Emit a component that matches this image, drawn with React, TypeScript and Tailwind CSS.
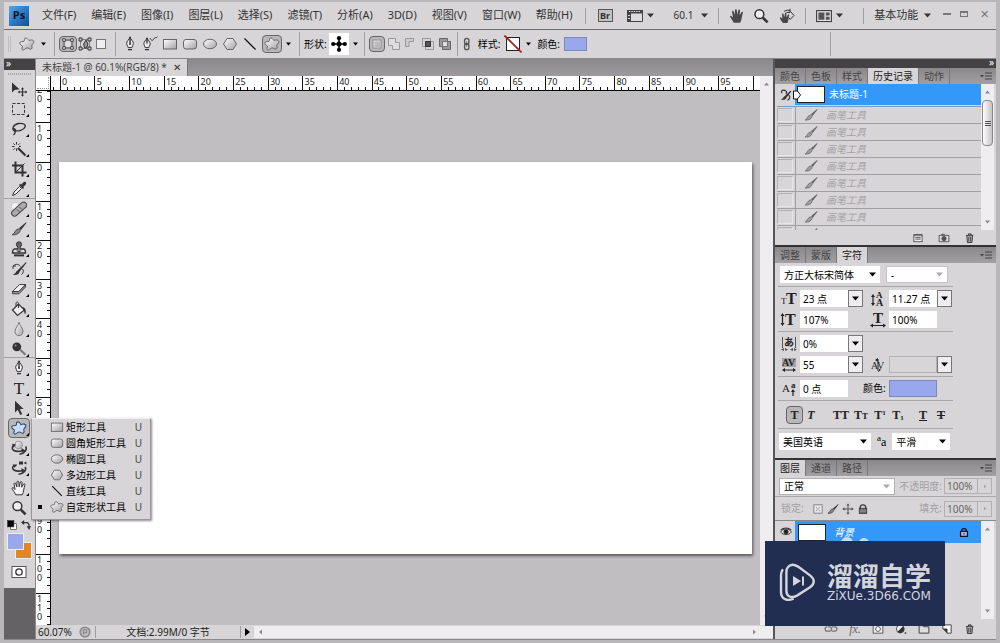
import type { ReactNode } from "react";
import clsx from "clsx";
import { twMerge } from "tailwind-merge";

const STAR = "M6 2.2C7.5 1.2 9 3 10 4.6C12 3.4 15.4 4 14.8 6.3C14.2 8 12.4 8.6 12.8 10C13.8 12.6 12 14 10 12.6C8.4 11.4 7.4 11.8 5.6 13.4C3.6 15 2 13.4 3.4 11C4.3 9.4 .8 9.2 .8 7.2C.8 5 4 5.9 5 5.2C5.8 4.6 5 3 6 2.2Z";

function Icon({ children, className }: { children: ReactNode; className?: string }) {
  return (
    <svg viewBox="0 0 16 16" className={twMerge("size-4 shrink-0", className)} fill="none" stroke="#333" aria-hidden="true">
      {children}
    </svg>
  );
}

const ink = { fill: "#333", stroke: "none" };

const glyphs: Record<string, ReactNode> = {
  move: <><path d="M1 1.5V11.5L3.6 9L8.5 8.2Z" {...ink} /><path d="M11.5 7V15M7.5 11H15.5" strokeWidth="1.2" /><path d="M11.5 6.2L13 8.2H10ZM11.5 15.8L13 13.8H10ZM6.8 11L8.8 9.5V12.5ZM16.2 11L14.2 9.5V12.5Z" {...ink} /></>,
  marquee: <rect x="1.5" y="2.5" width="12" height="11" strokeDasharray="3 1.6" />,
  lasso: <><path d="M4 10.5C0 8.5 2 3.5 7.5 2.5C12 1.8 15 3.5 14 6C13 9 7 10.8 3.5 9.5C2 9 2 7.5 3.5 7.8C5.5 8.2 4.5 12 2.5 14" strokeWidth="1.3" /></>,
  wand: <><path d="M7 7L14.5 14.5" strokeWidth="2.2" /><path d="M5.5 1V3.5M5.5 7.5V10M1 5.5H3.5M2.4 2.4L4 4M8.8 2.4L7.2 4M2.4 8.8L4 7.2M8 5.5H10" /></>,
  crop: <><path d="M4.5 .5V11.5H15.5M1 4.5H11.5V15.5" strokeWidth="2" /><path d="M5 11L13.5 2.5" /></>,
  dropper: <><path d="M1.5 14.5L3 11L8.5 5.5L10.5 7.5L5 13Z" fill="#eee" /><path d="M8 4L12 8L13.2 6.8L12.2 5.8C15 3.8 15.8 2.2 14.8 1.2C13.8 .2 12.2 1 10.2 3.8L9.2 2.8Z" {...ink} /></>,
  heal: <><circle cx="4.2" cy="5.5" r="3.8" fill="#f4f4f4" stroke="#bbb" strokeDasharray="1.5 1" /><rect x="-1" y="5.2" width="18" height="6" rx="3" transform="rotate(-42 8 8)" fill="#aaa" stroke="#444" /><path d="M6 8.5L8.5 11M8.5 6L11 8.5" stroke="#555" /></>,
  brush: <><path d="M15 1.2L8 7.2L9.8 9.2L15.4 2Z" {...ink} /><path d="M7.5 7.8L9.2 9.6C8.8 12 6 14.2 1.2 13.8C4 12.6 3.8 8.6 7.5 7.8Z" fill="#888" stroke="#333" strokeWidth=".8" /></>,
  stamp: <><circle cx="8" cy="3.4" r="2.6" fill="#666" /><path d="M7 5.5V8H3.5C1.5 8 1.5 12 1.5 12H14.5C14.5 12 14.5 8 12.5 8H9V5.5" fill="#ddd" strokeWidth="1.4" /><path d="M3 14.4H13" strokeWidth="2" /><path d="M5 9.4H11L8 11.5Z" {...ink} /></>,
  historyBrush: <><path d="M15 1L6.5 9.5C5 10 5 13 1.5 13.6C5 14.6 8.4 13.4 8.4 11L15.4 2Z" {...ink} /><path d="M2 5C5 2.5 8 3 9.5 5.5M2 5L2 8M2 5H5M11.5 8C13 9.5 12.5 12 10.5 13.5" /></>,
  eraser: <><path d="M1.5 10.5L8.5 3.5H14.5L8 10.5Z" fill="#eee" strokeWidth=".9" /><path d="M1.5 10.5V12.8H8L14.5 6V3.5L8 10.5Z" fill="#999" strokeWidth=".9" /></>,
  bucket: <><path d="M1.5 9L7.5 3L13.5 9L6.5 14.5Z" fill="#eee" strokeWidth="1.2" /><path d="M5 5.5V2.5C5 .5 7.5 .5 7.5 2.5V7" /><path d="M11 6C14.5 6.5 15.4 9 14.4 13.6C13 12 13 10 13 9Z" {...ink} /></>,
  blur: <path d="M8 1.2C8.6 4.5 12 7 12 10.6C12 16 4 16 4 10.6C4 7 7.4 4.5 8 1.2Z" fill="url(#metal)" stroke="#777" />,
  dodge: <><circle cx="5.8" cy="5.8" r="4.4" {...ink} /><path d="M9 8.6L14.5 13.8" strokeWidth="2" stroke="#777" /><circle cx="4.6" cy="4.6" r="1" fill="#999" stroke="none" /></>,
  pen: <><path d="M8 .8C8.4 3.4 11.6 5.2 11.4 7.6C11.2 9 10 10.2 9.8 11.6H6.2C6 10.2 4.8 9 4.6 7.6C4.4 5.2 7.6 3.4 8 .8Z" fill="#eee" /><path d="M8 1V7.5M6 13.6H10" strokeWidth="1.4" /><circle cx="8" cy="8" r="1" {...ink} /></>,
  freePen: <><path d="M5 1.8C5.4 4 8.4 5.6 8.2 8C8 9.2 7 10.2 6.8 11.6H3.2C3 10.2 2 9.2 1.8 8C1.6 5.6 4.6 4 5 1.8Z" fill="#eee" /><path d="M5 2V7.5M3 13.6H7" strokeWidth="1.4" /><path d="M8 2C9 5 11 5 11.5 3.2C12 1.6 14 2 15.5 .8" strokeWidth=".9" /></>,
  cursor: <path d="M4 .8V12.5L6.8 9.8L9.2 15L11.2 14L8.8 9H12.6Z" {...ink} />,
  rect: <rect x="1.5" y="3.5" width="13" height="9.5" fill="url(#metal)" stroke="#666" />,
  rrect: <rect x="1.5" y="3.5" width="13" height="9.5" rx="2.5" fill="url(#metal)" stroke="#666" />,
  ellipse: <ellipse cx="8" cy="8" rx="6.5" ry="4.8" fill="url(#metal)" stroke="#666" />,
  hex: <path d="M5 2.5H11L14.5 8L11 13.5H5L1.5 8Z" fill="url(#metal)" stroke="#666" />,
  line: <path d="M2.5 2.5L13.5 13.5" strokeWidth="1.3" stroke="#111" />,
  star: <path d={STAR} fill="url(#metal)" stroke="#666" />,
  starBlue: <path d={STAR} fill="#c9dcf8" stroke="#33486e" strokeWidth="1.1" />,
  rotate3d: <><circle cx="7.6" cy="5" r="3.8" fill="url(#metal)" stroke="#999" /><path d="M2.4 5.5C-1 10 4 12.8 12 10.5M14.5 6.5C16.5 9 14 13.5 8.5 14.2" strokeWidth="1.6" /><path d="M1 3.8L5 4.6L2.6 7.8ZM10.4 8L14.4 10.4L10.8 12.8Z" {...ink} /></>,
  camera3d: <><path d="M8 1.5H12V4.5H8ZM12.5 3L15.4 1.4V4.6Z" {...ink} /><path d="M3 5.5C-1 9 4 12.4 12 10.5M14 7C16 9.5 13 13.8 7.5 14.2" strokeWidth="1.6" /><path d="M1.6 4.4L6.4 4.6L3.6 7.8ZM10.4 8L14.4 10.4L10.8 12.8Z" {...ink} /></>,
  hand: <path d="M4.8 14.8C3.6 12 1.6 10.4 .9 8.2C1.6 7 2.8 8 4 9.6L3 3.6C3.6 2.4 4.6 2.8 4.8 3.8L5.8 7L6 1.8C6.6 .8 7.6 1 7.8 2L8.2 6.8L9.4 2C10.2 1.2 11 1.6 11 2.6L10.6 7.2L12.6 4C13.6 3.4 14.2 4 13.8 5.2C12.8 8 12.8 12 11.2 14.8Z" fill="#f4f4f4" strokeWidth="1" />,
  handDark: <path d="M4.8 14.8C3.6 12 1.6 10.4 .9 8.2C1.6 7 2.8 8 4 9.6L3 3.6C3.6 2.4 4.6 2.8 4.8 3.8L5.8 7L6 1.8C6.6 .8 7.6 1 7.8 2L8.2 6.8L9.4 2C10.2 1.2 11 1.6 11 2.6L10.6 7.2L12.6 4C13.6 3.4 14.2 4 13.8 5.2C12.8 8 12.8 12 11.2 14.8Z" fill="#484848" stroke="none" />,
  zoom: <><circle cx="6.4" cy="6.2" r="4.4" fill="#eee" strokeWidth="1.5" /><path d="M9.8 9.6L14.6 14.4" strokeWidth="2.6" /></>,
  rotateView: <><path d="M3.8 15C3 13 1 11.6 .8 9.4C1.8 8.8 2.6 9.8 3.4 10.6L3 6C3.6 5.2 4.4 5.6 4.6 6.4L5.4 9L6 5C6.8 4.4 7.4 4.8 7.4 5.6L7.2 9.4L9 6.6C10 6.2 10.4 6.8 10 7.8C9.2 10 9.8 12.6 8.4 15Z" fill="#484848" stroke="none" /><path d="M5 3.5C7 1.8 10 1.6 11.5 3.5L15 7.5L11.2 11.4L9.6 9.4M11 .8V4.4H7.4" /></>,
  quickMask: <><rect x="1" y="2.5" width="14" height="11" fill="#fff" stroke="#555" /><circle cx="8" cy="8" r="3.2" fill="#fff" strokeWidth="1.3" /></>,
  shapeLayer: <><rect x="3.5" y="3.5" width="9" height="9" fill="#ddd" /><path d="M2 2h3v3H2zM11 2h3v3h-3zM2 11h3v3H2zM11 11h3v3h-3z" fill="#eee" /></>,
  paths: <><rect x="3.5" y="3.5" width="9" height="9" strokeDasharray="1 1" /><path d="M2 2h3v3H2zM11 2h3v3h-3zM2 11h3v3H2zM11 11h3v3h-3z" fill="#ccc" /><path d="M9 4L11 8L9.6 12H7.6L6.6 8Z" fill="#999" /></>,
  fillPixels: <rect x="3.5" y="3.5" width="9" height="9" fill="#eee" stroke="#777" />,
  newLayer: <><rect x="3.5" y="3.5" width="9" height="9" fill="#eee" stroke="#888" /><rect x="5" y="5" width="7" height="7" fill="#bbb" stroke="none" /></>,
  add: <path d="M2.5 2.5H9.5V6.5H13.5V13.5H6.5V9.5H2.5Z" fill="#ddd" stroke="#999" />,
  subtract: <path d="M2.5 2.5H10.5V5.5H6V10.5H2.5Z" fill="#ccc" stroke="#999" />,
  intersect: <><path d="M2.5 2.5H10.5V10.5H2.5ZM5.5 5.5H13.5V13.5H5.5Z" stroke="#999" /><path d="M5.5 5.5H10.5V10.5H5.5Z" fill="#555" /></>,
  exclude: <><path d="M2.5 2.5H10.5V10.5H2.5ZM5.5 5.5H13.5V13.5H5.5Z" fill="#999" stroke="#666" /><path d="M5.5 5.5H10.5V10.5H5.5Z" fill="#ddd" stroke="#777" /></>,
  link: <><rect x="5.2" y="1.5" width="5" height="7" rx="2.5" strokeWidth="1.5" stroke="#555" /><rect x="5.2" y="7.5" width="5" height="7" rx="2.5" strokeWidth="1.5" stroke="#555" /><path d="M7.7 5V11" stroke="#555" /></>,
  cross: <><path d="M8 2V14M2 8H14" stroke="#000" strokeWidth="1.6" /><g fill="#000" stroke="none"><circle cx="8" cy="2.2" r="2.1" /><circle cx="8" cy="13.8" r="2.1" /><circle cx="2.2" cy="8" r="2.1" /><circle cx="13.8" cy="8" r="2.1" /><circle cx="8" cy="8" r="2.5" /></g></>,
  film: <><path d="M.5 2.5H15.5V13.5H.5Z" fill="#ddd" stroke="#444" /><path d="M0 2H16V5.4H4V14H0Z" fill="#444" stroke="none" /><path d="M2 3.5H14" stroke="#ddd" strokeDasharray="1.4 1" /><path d="M1 7.5H3M1 10.5H3" stroke="#ddd" /></>,
  arrange: <><rect x=".6" y="2.6" width="14.8" height="11" fill="#ddd" /><path d="M2.4 4.4H8.4V11.8H2.4ZM9.8 4.4H13.6V7.4H9.8ZM9.8 8.8H13.6V11.8H9.8Z" fill="#555" stroke="none" /></>,
  trash: <><path d="M2.5 4.5H12.5M6 4V2.5H9.5V4M3.8 5L4.6 14H10.6L11.4 5" strokeWidth="1.2" fill="#aaa" /><path d="M6.4 6.5V12.5M8.8 6.5V12.5" /></>,
  doc: <><rect x="2.5" y="3.5" width="11" height="9.5" fill="#eee" /><path d="M2.5 5H13.5M4.5 7.5H11.5M4.5 9.5H11.5" /></>,
  camera: <><path d="M1.5 4.5H14.5V13H1.5Z" fill="#ddd" /><circle cx="8" cy="8.8" r="2.8" fill="#555" /><path d="M5 4V3H9" /></>,
  chain: <path d="M4.5 5.5H7C9 5.5 9 10.5 7 10.5H3.5C.5 10.5 .5 5.5 3.5 5.5M9 5.5H12.5C15.5 5.5 15.5 10.5 12.5 10.5H9" strokeWidth="1.4" stroke="#777" />,
  mask: <><rect x="1.5" y="2.5" width="13" height="11" fill="#eee" /><circle cx="8" cy="8" r="3.2" fill="#fff" /></>,
  adjust: <><circle cx="7" cy="8" r="5.2" fill="#eee" /><path d="M3.3 11.7A5.2 5.2 0 0 0 10.7 4.3Z" {...ink} /><path d="M13 12.5h2v2h-2z" {...ink} /></>,
  folder: <path d="M1.5 3.5H6L7.5 5H14.5V13.5H1.5Z" fill="#ddd" strokeWidth="1.2" />,
  newDoc: <><path d="M2.5 2.5H13.5V13.5H8V8H2.5Z" fill="#fff" strokeWidth="1.2" /><path d="M2.5 8L8 13.5V8Z" {...ink} /></>,
  checker: <><rect x="2.5" y="2.5" width="11" height="11" fill="#eee" stroke="#666" /><path d="M5 5h2v2H5zM9 5h2v2H9zM7 7h2v2H7zM5 9h2v2H5zM9 9h2v2H9z" fill="#aaa" stroke="none" /></>,
  pan: <><path d="M8 2V14M2 8H14" strokeWidth="1.3" stroke="#555" /><path d="M8 .5L10.2 3.4H5.8ZM8 15.5L10.2 12.6H5.8ZM.5 8L3.4 5.8V10.2ZM15.5 8L12.6 5.8V10.2Z" fill="#555" stroke="none" /></>,
  lock: <><path d="M4.5 8V5C4.5 1.6 11.5 1.6 11.5 5V8" strokeWidth="1.7" /><rect x="3" y="7" width="10" height="7" fill="#666" /><path d="M4 9.5H12M4 11.5H12" stroke="#999" /></>,
  eye: <><path d="M.8 8C4 2.6 12 2.6 15.2 8C12 12.6 4 12.6 .8 8Z" fill="#eee" strokeWidth="1.2" /><circle cx="8" cy="7.8" r="3" fill="#222" /><path d="M1 5.6C4.6 1.8 11.4 1.8 15 5.6" strokeWidth="1.4" /></>,
  snapshot: <><path d="M13 3L6.5 9.5C5 10 5 12.6 2 13C5 14.2 8.4 13 8.4 11L14 4Z" {...ink} /><path d="M3 3C7 1.4 10 4 8 7M3 3V6M11 8C13.5 10 12 13 9.5 14" strokeWidth="1.3" /></>,
};

function Caret({ className }: { className?: string }) {
  return (
    <svg viewBox="0 0 7 5" className={twMerge("w-[7px] h-[5px] shrink-0", className)} fill="currentColor" aria-hidden="true">
      <path d="M0 .5H7L3.5 4.5Z" />
    </svg>
  );
}

function Rule({ className }: { className?: string }) {
  return <span className={clsx("w-px shrink-0 bg-[#a09ea0]", className)} />;
}

const menus = ["文件(F)", "编辑(E)", "图像(I)", "图层(L)", "选择(S)", "滤镜(T)", "分析(A)", "3D(D)", "视图(V)", "窗口(W)", "帮助(H)"];

function MenuBar() {
  return (
    <header className="flex h-7 shrink-0 items-center border-b border-[#6e6c6e] pl-[5px] pr-1 text-[11px] text-[#333]">
      <div className="mr-[13px] flex size-5 shrink-0 items-center justify-center bg-linear-to-br from-[#52a8e8] to-[#0c4f9c] text-[11px] font-bold text-[#04152e]">Ps</div>
      <nav className="flex gap-[15px] whitespace-nowrap">
        {menus.map(m => <button key={m}>{m}</button>)}
      </nav>
      <Rule className="mx-3 h-4" />
      <button aria-label="Bridge" className="flex h-[13px] w-[15px] items-center justify-center border border-[#555] bg-[#c4c2c4] text-[9px] font-bold leading-none">Br</button>
      <button aria-label="查看额外内容" className="ml-3.5 flex items-center gap-1"><Icon>{glyphs.film}</Icon><Caret /></button>
      <button className="ml-5 flex items-center gap-2 text-[10px]">60.1<Caret /></button>
      <Rule className="mx-2.5 h-4" />
      <div className="flex gap-2">
        <button aria-label="抓手"><Icon>{glyphs.handDark}</Icon></button>
        <button aria-label="缩放"><Icon>{glyphs.zoom}</Icon></button>
        <button aria-label="旋转视图" className="ml-0.5"><Icon>{glyphs.rotateView}</Icon></button>
      </div>
      <Rule className="mx-2.5 h-4" />
      <button aria-label="排列文档" className="flex items-center gap-1"><Icon>{glyphs.arrange}</Icon><Caret /></button>
      <Rule className="ml-5 mr-2.5 h-4" />
      <button className="flex items-center gap-1.5 whitespace-nowrap">基本功能<Caret /></button>
      <div className="ml-auto flex items-center gap-2 pb-1 text-[#777]">
        <button aria-label="最小化" className="px-px"><span className="block h-0.5 w-2 bg-[#777]" /></button>
        <button aria-label="最大化" className="h-1.5 w-2 border border-t-2 border-[#777]" />
        <button aria-label="关闭" className="w-4 leading-none">✕</button>
      </div>
    </header>
  );
}

const pressed = "rounded-sm border border-[#666] bg-[#b9b7b9]";

function OptionsBar() {
  return (
    <div className="flex h-[29px] shrink-0 items-center border-b border-[#8a888a] pl-1 text-[10px] text-black">
      <span className="mr-2 h-4 w-[3px] border-x border-[#c0bec0]" />
      <button aria-label="工具预设" className="flex items-center gap-1.5"><Icon>{glyphs.star}</Icon><Caret className="w-[5px] h-1" /></button>
      <Rule className="ml-2 mr-1 h-6" />
      <button aria-label="形状图层" className={clsx(pressed, "px-px")}><Icon className="size-3.5">{glyphs.shapeLayer}</Icon></button>
      <button aria-label="路径"><Icon>{glyphs.paths}</Icon></button>
      <button aria-label="填充像素"><Icon>{glyphs.fillPixels}</Icon></button>
      <Rule className="mx-1.5 h-6" />
      <div className="flex items-center gap-1">
        {["pen", "freePen", "rect", "rrect", "ellipse", "hex", "line"].map(g => (
          <button key={g} aria-label={g}><Icon>{glyphs[g]}</Icon></button>
        ))}
        <button aria-label="自定形状" className={clsx(pressed, "px-px")}><Icon>{glyphs.star}</Icon></button>
        <Caret className="w-[5px] h-1" />
      </div>
      <Rule className="ml-2 mr-1 h-6" />
      <span>形状:</span>
      <button aria-label="形状" className="ml-0.5 flex items-center gap-1"><span className="bg-white px-0.5 py-[3px]"><Icon>{glyphs.cross}</Icon></span><Caret className="w-[5px] h-1" /></button>
      <Rule className="ml-1.5 mr-1 h-6" />
      <div className="flex items-center gap-px">
        <button aria-label="创建新图层" className={pressed}><Icon className="size-3.5">{glyphs.newLayer}</Icon></button>
        {["add", "subtract", "intersect", "exclude"].map(g => (
          <button key={g} aria-label={g}><Icon>{glyphs[g]}</Icon></button>
        ))}
      </div>
      <Rule className="ml-1 mr-0.5 h-6" />
      <Icon className="size-3.5">{glyphs.link}</Icon>
      <span className="ml-1">样式:</span>
      <button aria-label="样式" className="ml-1 flex items-center gap-1">
        <svg viewBox="0 0 18 18" className="size-[18px]" aria-hidden="true">
          <rect x="2.5" y="2.5" width="13" height="13" fill="#fff" stroke="#222" />
          <path d="M.5 .5L17.5 17.5" stroke="#a51d22" strokeWidth="1.6" />
        </svg>
        <Caret className="w-[5px] h-1" />
      </button>
      <span className="ml-1.5">颜色:</span>
      <button aria-label="颜色" className="ml-1 h-3.5 w-[23px] border border-[#7f87b8] bg-[#99a8ec]" />
      <Rule className="ml-auto mr-[165px] h-6" />
    </div>
  );
}

const toolGroups = [
  ["move", "marquee", "lasso", "wand", "crop", "dropper"],
  ["heal", "brush", "stamp", "historyBrush", "eraser", "bucket", "blur", "dodge"],
  ["pen", "type", "cursor", "starBlue", "rotate3d", "camera3d", "hand", "zoom"],
];

const shapeTools = [
  ["rect", "矩形工具"],
  ["rrect", "圆角矩形工具"],
  ["ellipse", "椭圆工具"],
  ["hex", "多边形工具"],
  ["line", "直线工具"],
  ["star", "自定形状工具"],
];

function ShapeFlyout() {
  return (
    <div role="menu" className="absolute left-[27px] top-0 z-20 w-[120px] border border-[#9a989a] border-t-[#eee] bg-[#d7d5d7] pb-1 text-[10px] text-black shadow-[1px_1px_2px_rgba(0,0,0,0.45)]">
      {shapeTools.map(([g, name], i) => (
        <button key={g} role="menuitem" className="flex h-4 w-full items-center whitespace-nowrap pl-1.5 pr-2">
          <span className={clsx("size-1 shrink-0", i === 5 && "bg-black")} />
          <Icon className="ml-2 mr-0.5 size-3.5">{glyphs[g]}</Icon>
          {name}
          <span className="ml-auto text-[#444]">U</span>
        </button>
      ))}
    </div>
  );
}

function Toolbox() {
  return (
    <aside className="flex w-8 shrink-0 flex-col border-r border-[#8a888a] bg-[#646264]">
      <div className="h-[11px] shrink-0 bg-[#444244] pl-0.5 text-[10px] leading-[9px] text-white">»</div>
      <div className="flex flex-col bg-[#d7d5d7] pb-2">
        <span className="mx-1 mb-1 mt-[3px] h-0.5 border-y border-dotted border-[#a5a3a5]" />
        {toolGroups.map((group, gi) => (
          <div key={gi} className={clsx("flex flex-col", gi === 0 && "h-[118px]", gi === 1 && "mt-px h-[158px] border-t border-[#a09ea0]", gi === 2 && "mt-px h-40 border-t border-[#a09ea0]")}>
            {group.map(t => (
              <div key={t} className="relative flex flex-1 items-center">
                <button aria-label={t} className={clsx("ml-1 flex h-5 w-[22px] items-center justify-center", t === "starBlue" && pressed)}>
                  {t === "type"
                    ? <span className="font-['Liberation_Serif'] text-[17px] leading-none text-[#222]">T</span>
                    : <Icon>{glyphs[t]}</Icon>}
                </button>
                {t !== "move" && t !== "zoom" && (
                  <svg viewBox="0 0 3 3" className="absolute bottom-0.5 left-[22px] size-[3px]" aria-hidden="true"><path d="M3 0V3H0Z" /></svg>
                )}
                {t === "starBlue" && <ShapeFlyout />}
              </div>
            ))}
          </div>
        ))}
        <div className="mt-0.5 flex h-3 items-center gap-1 pl-[3px]">
          <Icon className="size-2.5"><rect x="6" y="6" width="9" height="9" fill="#fff" /><rect x="1" y="1" width="10" height="10" fill="#000" /></Icon>
          <Icon className="size-2.5"><path d="M4 4H9C12 4 13 7 13 11" strokeWidth="2" /><path d="M0 4L5 0V8ZM13 16L9 10H16Z" {...ink} /></Icon>
        </div>
        <div className="relative ml-[3px] mt-0.5 h-[26px] w-[25px]">
          <button aria-label="背景色" className="absolute bottom-0 right-0 size-[17px] border border-[#eee] bg-[#e58420]" />
          <button aria-label="前景色" className="absolute left-0 top-0 size-[17px] border border-[#eee] bg-[#99a8ec]" />
        </div>
        <button aria-label="快速蒙版" className="ml-[7px] mt-[5px]"><Icon>{glyphs.quickMask}</Icon></button>
      </div>
    </aside>
  );
}

function TopRuler() {
  const step = 34.65;
  return (
    <svg className="h-[15px] min-w-0 flex-1 border-b border-black bg-white text-[9px]" fill="#222" aria-hidden="true">
      {Array.from({ length: 300 }, (_, i) => i - 1).map(i => {
        const x = Math.round(8.7 + (i * step) / 5);
        const major = i % 5 === 0;
        return <path key={i} d={major ? `M${x}.5 0V14` : `M${x}.5 11V14`} stroke="#111" />;
      })}
      {Array.from({ length: 20 }, (_, i) => <text key={i} x={11 + i * step} y="9">{i * 5}</text>)}
    </svg>
  );
}

function SideRuler() {
  const step = 39.2;
  return (
    <svg className="w-[15px] shrink-0 border-r border-black bg-white text-[9px]" fill="#222" aria-hidden="true">
      {Array.from({ length: 300 }, (_, i) => i - 10).map(i => {
        const y = Math.round(70.5 + (i * step) / 5);
        return <path key={i} d={i % 5 === 0 ? `M0 ${y}.5H14` : `M11 ${y}.5H14`} stroke="#111" />;
      })}
      {Array.from({ length: 14 }, (_, i) => i - 2).map(i =>
        String(Math.abs(i * 10)).split("").map((d, k) => (
          <text key={`${i}-${k}`} x="1" y={80 + i * step + k * 9}>{d}</text>
        ))
      )}
    </svg>
  );
}

function ScrollArrow({ dir }: { dir: "up" | "down" | "left" | "right" }) {
  return <Caret className={clsx("w-[5px] h-1 text-[#8a888a]", dir === "up" && "rotate-180", dir === "left" && "rotate-90", dir === "right" && "-rotate-90")} />;
}

function DocumentArea() {
  return (
    <main className="flex min-w-0 flex-1 flex-col">
      <div className="flex h-[17px] shrink-0 bg-linear-to-b from-[#8a888a] to-[#9c9a9c]">
        <div className="flex items-center gap-1.5 border-r border-[#777] bg-[#d7d5d7] px-1.5 text-[10px] text-[#444]">
          <span className="whitespace-nowrap">未标题-1 @ 60.1%(RGB/8) *</span>
          <button aria-label="关闭文档" className="text-[#333]">✕</button>
        </div>
      </div>
      <div className="flex min-h-0 flex-1">
        <div className="flex min-w-0 flex-1 flex-col">
          <div className="flex shrink-0">
            <span className="w-[15px] border-b border-r border-black bg-white p-px"><span className="block size-3 border-b border-r border-dotted border-[#999]" /></span>
            <TopRuler />
          </div>
          <div className="flex min-h-0 flex-1">
            <SideRuler />
            <div className="flex min-w-0 flex-1 bg-[#c0bec0] px-2 py-[71px]">
              <div className="flex-1 bg-white shadow-[1px_2px_3px_rgba(0,0,0,0.55)]" />
            </div>
          </div>
        </div>
        <div className="flex w-[13px] shrink-0 flex-col items-center justify-between bg-[#efedef] py-1.5">
          <ScrollArrow dir="up" />
          <ScrollArrow dir="down" />
        </div>
      </div>
      <footer className="flex h-[14px] shrink-0 items-center bg-[#d7d5d7] text-[10px] leading-none text-[#222]">
        <span className="w-[43px] pl-0.5">60.07%</span>
        <Icon className="mr-1 size-3"><circle cx="8" cy="8" r="6.5" fill="#bbb" stroke="#888" strokeWidth="2" /><path d="M6 5V11M6 5H10V9H6" stroke="#777" /></Icon>
        <Rule className="h-3" />
        <span className="w-36 whitespace-nowrap text-center">文档:2.99M/0 字节</span>
        <Rule className="h-3" />
        <button aria-label="状态菜单" className="px-1"><svg viewBox="0 0 5 8" className="h-2 w-[5px]"><path d="M0 0L5 4L0 8Z" /></svg></button>
        <span className="flex h-3 flex-1 items-center justify-between bg-[#efedef] pl-1 pr-4">
          <ScrollArrow dir="left" />
          <ScrollArrow dir="right" />
        </span>
      </footer>
    </main>
  );
}

function PanelTabs({ tabs, active }: { tabs: string[]; active: number }) {
  return (
    <div role="tablist" className="flex h-4 shrink-0 items-stretch bg-linear-to-b from-[#8a888a] to-[#a2a0a2] text-[10px]">
      {tabs.map((t, i) => (
        <button key={t} role="tab" aria-selected={i === active} className={clsx("whitespace-nowrap border-r border-[#777] px-[5px] leading-none", i === active ? "bg-[#d7d5d7] text-[#222]" : "text-[#444]")}>
          {t}
        </button>
      ))}
      <button aria-label="面板菜单" className="ml-auto mr-1">
        <svg viewBox="0 0 12 8" className="h-2 w-3" fill="#444"><path d="M0 3H4L2 5.5ZM5 0.5H12V1.5H5ZM5 3.5H12V4.5H5ZM5 6.5H12V7.5H5Z" /></svg>
      </button>
    </div>
  );
}

function HistoryPanel() {
  return (
    <section className="flex shrink-0 flex-col border-b-2 border-[#333]">
      <PanelTabs tabs={["颜色", "色板", "样式", "历史记录", "动作"]} active={3} />
      <div className="flex h-[146px] pl-0.5 text-[10px]">
        <div className="min-w-0 flex-1 overflow-hidden">
          <div className="flex h-[21px] items-center bg-[#3398f8] text-white">
            <span className="flex h-full w-[18px] items-center justify-center bg-[#d7d5d7]"><Icon className="size-3.5">{glyphs.snapshot}</Icon></span>
            <svg viewBox="0 0 8 10" className="-ml-0.5 -mr-1 z-10 h-2.5 w-2 shrink-0" fill="#fff" stroke="#111" aria-hidden="true"><path d="M.5 1H4.5L7.5 5L4.5 9H.5Z" /></svg>
            <span className="mr-1 h-[17px] w-7 border border-[#222] bg-white" />
            未标题-1
          </div>
          <div className="h-0.5 border-b border-[#7d9cc0]" />
          {Array.from({ length: 8 }, (_, i) => (
            <div key={i} className="flex h-[17px] items-center border-b border-[#a19fa1] text-[#a5a3a5]">
              <span className="mr-0.5 h-3.5 w-4 border border-[#b2b0b2] border-b-[#e8e6e8] border-r-[#e8e6e8]" />
              <Rule className="h-full" />
              <Icon className="mx-2 size-3.5 opacity-70">{glyphs.brush}</Icon>
              {i < 7 && <em>画笔工具</em>}
            </div>
          ))}
        </div>
        <div className="mr-0.5 flex w-[13px] flex-col items-center bg-[#efedef] py-1.5">
          <ScrollArrow dir="up" />
          <span className="mb-auto mt-1.5 flex h-[46px] w-[11px] flex-col items-center justify-center gap-px rounded-sm border border-[#8a888a] bg-linear-to-r from-white to-[#c5c3c5]">
            <span className="h-px w-1.5 bg-[#555]" /><span className="h-px w-1.5 bg-[#555]" /><span className="h-px w-1.5 bg-[#555]" />
          </span>
          <ScrollArrow dir="down" />
        </div>
      </div>
      <div className="flex h-[15px] items-center justify-end gap-3.5 pr-5">
        <button aria-label="从当前状态创建新文档"><Icon className="size-3">{glyphs.doc}</Icon></button>
        <button aria-label="创建新快照"><Icon className="size-3">{glyphs.camera}</Icon></button>
        <button aria-label="删除"><Icon className="size-3">{glyphs.trash}</Icon></button>
      </div>
    </section>
  );
}

function Pick({ label, value, className, muted }: { label: string; value: string; className?: string; muted?: boolean }) {
  return (
    <span className={clsx("relative flex h-[17px] items-center bg-white", className)}>
      <select aria-label={label} disabled={muted} className="h-full w-full appearance-none pl-1 pr-4 text-[10px] leading-none text-black opacity-100">
        <option>{value}</option>
      </select>
      <Caret className={clsx("pointer-events-none absolute right-1", muted && "text-[#aaa]")} />
    </span>
  );
}

function Combo({ label, value, arrow = true }: { label: string; value: string; arrow?: boolean }) {
  return (
    <span className="flex h-[17px]">
      <input aria-label={label} defaultValue={value} className={clsx("h-full w-12 px-[3px] text-[10px]", value ? "bg-white" : "border border-[#b5b3b5]")} />
      {arrow && (
        <button aria-label={`${label}选项`} className="flex w-[15px] items-center justify-center border border-[#777] bg-[#efedef]"><Caret /></button>
      )}
    </span>
  );
}

const serif = "font-['Liberation_Serif'] leading-none";

// letters with small measuring arrows, one per field of the character panel
function TypeIcon({ children }: { children: ReactNode }) {
  return (
    <svg viewBox="0 0 18 16" className="mx-auto h-4 w-[18px] font-['Liberation_Serif'] font-bold" fill="#222" stroke="none" aria-hidden="true">
      {children}
    </svg>
  );
}

function CharacterPanel() {
  const grid = "grid grid-cols-[22px_67px_22px_63px] items-center gap-y-[4px] py-[3px]";
  return (
    <section className="flex shrink-0 flex-col border-b-2 border-[#333]">
      <PanelTabs tabs={["调整", "蒙版", "字符"]} active={2} />
      <div className="flex h-[195px] w-[178px] flex-col divide-y divide-[#a9a7a9] pl-[3px] text-[10px] text-black">
        <div className="flex items-center gap-1.5 py-[3px] pl-0.5">
          <Pick label="字体" value="方正大标宋简体" className="w-[100px]" />
          <Pick label="字体样式" value="-" className="w-[62px] border border-[#c5c3c5]" muted />
        </div>
        <div className={grid}>
          <TypeIcon><text x="1" y="13" fontSize="9" fontWeight="400">T</text><text x="6" y="13" fontSize="16">T</text></TypeIcon>
          <Combo label="字号" value="23 点" />
          <TypeIcon><text x="7" y="7" fontSize="9">A</text><text x="7" y="15" fontSize="10">A</text><path d="M4 3L6 6H4.6V12H6L4 15L2 12H3.4V6H2Z" /></TypeIcon>
          <Combo label="行距" value="11.27 点" />
          <TypeIcon><path d="M2.5 1L4.5 4H3.1V11H4.5L2.5 14L.5 11H1.9V4H.5Z" /><text x="5" y="13" fontSize="16">T</text></TypeIcon>
          <Combo label="垂直缩放" value="107%" arrow={false} />
          <TypeIcon><text x="4" y="11" fontSize="15">T</text><path d="M1 13.5L4 11.5V13H14V11.5L17 13.5L14 15.5V14H4V15.5Z" /></TypeIcon>
          <Combo label="水平缩放" value="100%" arrow={false} />
        </div>
        <div className={grid}>
          <TypeIcon><path d="M2 1H3V12H2ZM15 1H16V12H15ZM1 13.5L4 12V15ZM8 13.5L5 12V15ZM10 13.5L13 12V15ZM17 13.5L14 12V15Z" fill="#555" /><text x="4" y="10" fontSize="10" className="font-['Noto_Sans_CJK_JP']">あ</text></TypeIcon>
          <Combo label="比例间距" value="0%" />
          <span /><span />
          <TypeIcon><path d="M2 1H16V10H2Z" fill="#a5a3a5" /><text x="2" y="9" fontSize="10">AV</text><path d="M2 13L5 11V12.5H13V11L16 13L13 15V13.5H5V15Z" /></TypeIcon>
          <Combo label="字距" value="55" />
          <TypeIcon><text x="2" y="12" fontSize="10" fontWeight="400">AV</text><path d="M8.5 2H9.5V14H8.5ZM6 3L9 1V5ZM12 13L9 11V15Z" /></TypeIcon>
          <Combo label="字偶间距" value="" />
        </div>
        <div className={grid}>
          <TypeIcon><text x="2" y="11" fontSize="11" fontWeight="400">A</text><text x="11" y="7" fontSize="9">a</text><path d="M13 8L15 11H13.6V15H12.4V11H11Z" /></TypeIcon>
          <Combo label="基线偏移" value="0 点" arrow={false} />
          <span className="-ml-1 whitespace-nowrap">颜色:</span>
          <button aria-label="文字颜色" className="h-[17px] w-12 border border-[#7f87b8] bg-[#99a8ec]" />
        </div>
        <div className={clsx("flex flex-1 items-center pl-2 text-[12px] font-bold text-[#222]", serif)}>
          <button className={clsx(pressed, "h-[18px] w-[17px]")}>T</button>
          <button className="w-4 italic">T</button>
          <button className="ml-3 w-5">TT</button>
          <button className="w-5">T<span className="text-[9px]">T</span></button>
          <button className="w-[18px]">T<sup className="text-[7px]">1</sup></button>
          <button className="w-[18px]">T<sub className="text-[7px]">1</sub></button>
          <button className="ml-2 w-4 underline">T</button>
          <button className="w-5 line-through">T</button>
        </div>
        <div className="flex items-center gap-1.5 pb-2 pl-px pt-1">
          <Pick label="语言" value="美国英语" className="w-[92px]" />
          <span className={clsx("text-[12px]", serif)} aria-hidden="true"><sup>a</sup>a</span>
          <Pick label="消除锯齿" value="平滑" className="w-[58px]" />
        </div>
      </div>
    </section>
  );
}

function Percent({ label }: { label: string }) {
  return (
    <label className="ml-auto flex items-center gap-0.5 whitespace-nowrap text-[#a19fa1]">
      {label}:
      <input defaultValue="100%" className="h-4 w-[34px] border border-[#b2b0b2] px-0.5 text-[10px] text-[#666]" />
      <span className="-ml-0.5 flex h-4 w-3.5 items-center justify-center border border-l-0 border-[#b2b0b2]"><Caret className="w-1 h-[3px] -rotate-90" /></span>
    </label>
  );
}

function LayersPanel() {
  return (
    <section className="flex min-h-0 flex-1 flex-col">
      <PanelTabs tabs={["图层", "通道", "路径"]} active={0} />
      <div className="flex h-[21px] items-center border-b border-[#a9a7a9] pl-1 pr-1 text-[10px]">
        <Pick label="混合模式" value="正常" className="w-[116px] border border-[#b2b0b2]" muted />
        <Percent label="不透明度" />
      </div>
      <div className="flex h-[23px] items-center pl-1.5 pr-1 text-[10px] text-[#a19fa1]">
        <span className="mr-2">锁定:</span>
        <div className="flex gap-[3px]">
          {["checker", "brush", "pan", "lock"].map(g => <button key={g} aria-label={g}><Icon className="size-3">{glyphs[g]}</Icon></button>)}
        </div>
        <Percent label="填充" />
      </div>
      <div className="flex min-h-0 flex-1 border-t border-[#8a888a] pl-0.5">
        <div className="flex-1">
          <div className="flex h-[22px] items-center bg-[#3398f8] text-[10px] text-white">
            <span className="mr-[3px] flex h-full w-[18px] items-center justify-center bg-[#d7d5d7]"><Icon className="size-3">{glyphs.eye}</Icon></span>
            <span className="mr-2 h-[17px] w-7 border border-[#222] bg-white" />
            <em>背景</em>
            <Icon className="ml-auto mr-3 size-2.5"><path d="M4.5 8V5C4.5 1.6 11.5 1.6 11.5 5V8" stroke="#112" strokeWidth="2" /><rect x="2.5" y="7" width="11" height="8" fill="#9cc4f0" stroke="#112" strokeWidth="2" /><path d="M8 10V12" stroke="#112" strokeWidth="2" /></Icon>
          </div>
        </div>
        <div className="mr-0.5 flex w-[13px] flex-col items-center justify-between bg-[#efedef] py-1.5">
          <ScrollArrow dir="up" />
          <ScrollArrow dir="down" />
        </div>
      </div>
      <div className="flex h-5 shrink-0 items-center justify-end gap-[11px] pr-5">
        <button aria-label="链接图层"><Icon className="size-3.5">{glyphs.chain}</Icon></button>
        <button aria-label="图层样式" className={clsx("w-3 text-[12px] italic text-[#666]", serif)}>fx.</button>
        {["mask", "adjust", "folder", "newDoc", "trash"].map(g => <button key={g} aria-label={g}><Icon className="size-3">{glyphs[g]}</Icon></button>)}
      </div>
    </section>
  );
}

function Watermark() {
  return (
    <div className="absolute bottom-3.5 right-[51px] z-30 flex h-[85px] w-[180px] items-center gap-3 bg-[#222d52] pb-1 pl-3.5 text-[#d3d5dc]">
      <div className="absolute -top-1 left-[76px] flex h-1 gap-1.5 overflow-hidden" aria-hidden="true">
        <span className="h-4 w-3 rounded-full bg-[#c4def9]" />
        <span className="mt-px h-4 w-2.5 rounded-full bg-[#c4def9]" />
      </div>
      <svg viewBox="0 0 36 38" className="h-[38px] w-9 shrink-0" fill="none" stroke="currentColor" strokeWidth="2.4" aria-hidden="true">
        <path d="M9 4C12 .8 15 1.2 19 3.6L31 12.4C36 16.2 36 20.6 31 24.2L18 32.6C12 35.6 7.6 33.6 7.4 28V9C7.4 7 7.8 5.2 9 4Z" />
        <path d="M4 6.4C2.4 8 2 9.6 2 12V29C2.2 36.6 8.4 38.4 14.6 35.6" />
        <path d="M14 13L22 18L14 23Z" fill="currentColor" stroke="none" />
        <path d="M24 13.6V22.4" strokeWidth="2" />
      </svg>
      <div className="flex flex-col whitespace-nowrap">
        <span className="text-[26px] font-bold leading-7">溜溜自学</span>
        <span className="font-['DejaVu_Sans'] text-[12px] leading-3">ZiXUe.3D66.COM</span>
      </div>
    </div>
  );
}

export default function App() {
  return (
    <div className="relative flex h-screen flex-col overflow-hidden border-x-4 border-b-[3px] border-t-2 border-[#b9b7b9] bg-[#d7d5d7] font-['Noto_Sans','Noto_Sans_CJK_SC',sans-serif]">
      <svg className="absolute size-0" aria-hidden="true">
        <linearGradient id="metal" x1="0" y1="0" x2="1" y2="1">
          <stop offset="0" stopColor="#fff" />
          <stop offset="1" stopColor="#a3a1a3" />
        </linearGradient>
      </svg>
      <MenuBar />
      <OptionsBar />
      <div className="flex min-h-0 flex-1 border-b border-[#8a888a]">
        <Toolbox />
        <DocumentArea />
        <aside className="flex w-[223px] shrink-0 flex-col border-l-2 border-[#555]">
          <div className="h-[9px] shrink-0 bg-[#444244] pr-0.5 text-right text-[10px] leading-[7px] text-white">»</div>
          <HistoryPanel />
          <CharacterPanel />
          <LayersPanel />
        </aside>
      </div>
      <Watermark />
    </div>
  );
}
